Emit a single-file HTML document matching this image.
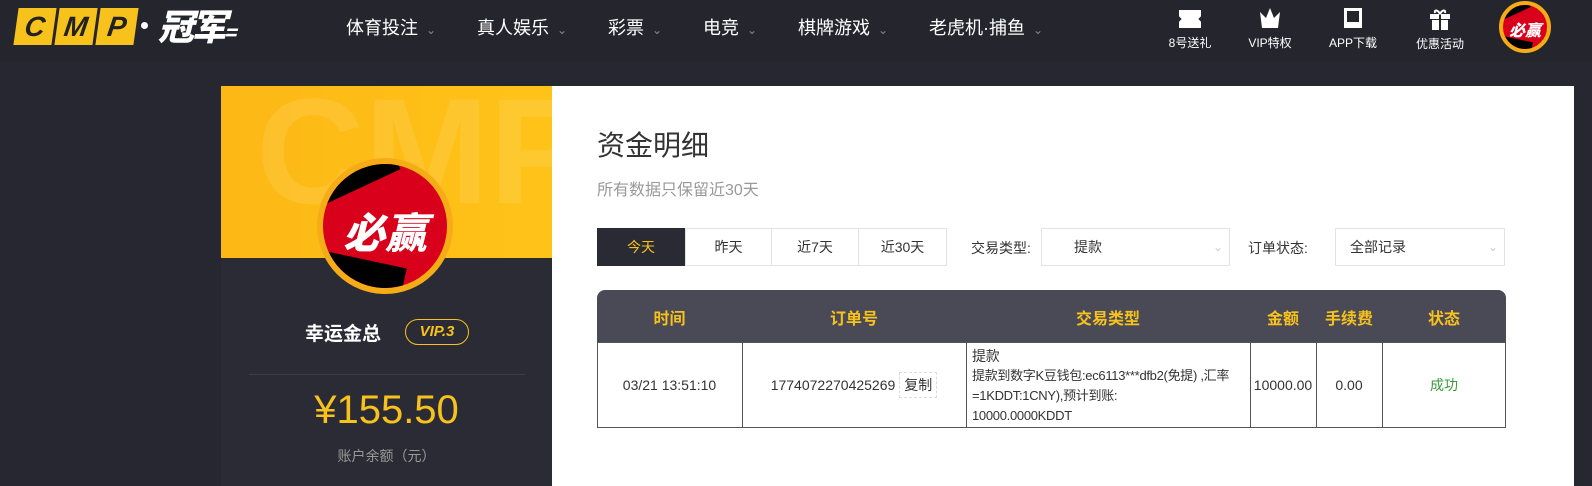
<!DOCTYPE html>
<html><head><meta charset="utf-8"><style>
*{margin:0;padding:0;box-sizing:border-box}
body{width:1592px;height:473px;overflow:hidden;background:#272731;font-family:"Liberation Sans","Noto Sans CJK SC",sans-serif;position:relative}
.hdr{position:absolute;left:0;top:0;width:1592px;height:62px;background:#25252e}
.logo{position:absolute;left:16px;top:8px;display:flex;gap:3px}
.logo b{display:block;width:38px;height:37px;background:#f8c21c;color:#222;font:italic 900 28px/37px "Liberation Sans",sans-serif;text-align:center;transform:skewX(-8deg)}
.gj{position:absolute;left:158px;top:4px;color:#fff;font:italic 900 36px/42px "Noto Sans CJK SC",sans-serif;letter-spacing:-3px}
.nav{position:absolute;top:14px;color:#fff;font-size:18px}
.nav span{color:#888;font-size:12px;margin-left:8px}
.ic{position:absolute;top:8px;width:80px;text-align:center;color:#fff;font-size:12px}
.ic i{display:block;margin:0 auto 6px;width:20px;height:20px;background:#fff}
.av{position:absolute;border-radius:50%;background:#d8001a;overflow:hidden;border:4px solid #f5ac17}
.av:before{content:"";position:absolute;left:-10%;top:-5%;width:70%;height:25%;background:#000;transform:rotate(-25deg)}
.av:after{content:"";position:absolute;left:-5%;bottom:-5%;width:70%;height:28%;background:#000;transform:rotate(12deg)}
.av span{position:absolute;left:0;right:0;text-align:center;color:#fff;font-weight:900;font-style:italic;z-index:2}
.side{position:absolute;left:221px;top:86px;width:331px;height:400px;background:#2b2b35}
.ytop{position:absolute;left:0;top:0;width:331px;height:172px;background:linear-gradient(90deg,#fdb815,#fec318);overflow:hidden}
.main{position:absolute;left:552px;top:86px;width:1022px;height:400px;background:#fff}
.t{position:absolute;font-size:14px;color:#333}
.cell{position:absolute;display:flex;align-items:center;justify-content:center;font-size:14px;color:#333}
</style></head><body>
<div class="hdr">
<div class="logo"><b>C</b><b>M</b><b>P</b></div>
<div style="position:absolute;left:141px;top:22px;width:7px;height:7px;border-radius:50%;background:#fff"></div>
<div class="gj">冠军<span style="font-size:20px">=</span></div>
<div class="nav" style="left:346px">体育投注<span>⌄</span></div>
<div class="nav" style="left:477px">真人娱乐<span>⌄</span></div>
<div class="nav" style="left:608px">彩票<span>⌄</span></div>
<div class="nav" style="left:703px">电竞<span>⌄</span></div>
<div class="nav" style="left:798px">棋牌游戏<span>⌄</span></div>
<div class="nav" style="left:929px">老虎机·捕鱼<span>⌄</span></div>
<div class="ic" style="left:1150px"><i style="width:22px;height:18px;margin-top:2px;clip-path:polygon(0 0,100% 0,100% 35%,88% 50%,100% 65%,100% 100%,0 100%,0 65%,12% 50%,0 35%)"></i>8号送礼</div>
<div class="ic" style="left:1230px"><i style="clip-path:polygon(0 20%,30% 50%,50% 0,70% 50%,100% 20%,90% 100%,10% 100%)"></i>VIP特权</div>
<div class="ic" style="left:1313px"><i style="width:18px;background:none;border:3px solid #fff;border-bottom-width:6px"></i>APP下载</div>
<div class="ic" style="left:1400px"><svg width="22" height="22" viewBox="0 0 22 22" style="display:block;margin:0 auto 5px"><path d="M1 6h20v5H1zM3 12h16v10H3z" fill="#fff"/><path d="M10 6v16h2V6z" fill="#25252e"/><path d="M11 6C9 2 5 1 6 5M11 6c2-4 6-5 5-1" stroke="#fff" stroke-width="2" fill="none"/></svg>优惠活动</div>
<div class="av" style="left:1499px;top:1px;width:52px;height:52px"><span style="top:12px;font-size:16px">必赢</span></div>
</div>
<div class="side">
<div class="ytop"><div style="position:absolute;left:35px;top:-10px;font:bold 150px/1 'Liberation Sans';color:rgba(255,255,255,.1)">CMP</div></div>
<div class="av" style="left:96px;top:72px;width:136px;height:136px;border-width:6px"><span style="top:36px;font-size:42px">必赢</span></div>
<div style="position:absolute;left:84px;top:233px;color:#fff;font-size:19px;font-weight:bold">幸运金总</div>
<div style="position:absolute;left:184px;top:233px;width:64px;height:26px;border:1px solid #f8c21c;border-radius:13px;color:#f8c21c;font:italic bold 15px/24px 'Liberation Sans';text-align:center">VIP.3</div>
<div style="position:absolute;left:28px;top:288px;width:276px;height:1px;background:#3d3d48"></div>
<div style="position:absolute;left:0;width:331px;top:302px;text-align:center;color:#f8c21c;font-size:40px">¥155.50</div>
<div style="position:absolute;left:0;width:331px;top:360px;text-align:center;color:#999;font-size:14px">账户余额（元）</div>
</div>
<div class="main">
<div class="t" style="left:45px;top:38px;font-size:28px">资金明细</div>
<div class="t" style="left:45px;top:90px;font-size:16px;color:#999">所有数据只保留近30天</div>
</div>
<div class="cell" style="left:597px;top:228px;width:88px;height:38px;background:#2a2a35;color:#f8c21c">今天</div>
<div class="cell" style="left:685px;top:228px;width:87px;height:38px;border:1px solid #e3e3e3">昨天</div>
<div class="cell" style="left:772px;top:228px;width:87px;height:38px;border:1px solid #e3e3e3;border-left:0">近7天</div>
<div class="cell" style="left:859px;top:228px;width:88px;height:38px;border:1px solid #e3e3e3;border-left:0">近30天</div>
<div class="t" style="left:971px;top:238px">交易类型:</div>
<div class="cell" style="left:1041px;top:228px;width:189px;height:38px;border:1px solid #e3e3e3;justify-content:flex-start;padding-left:32px">提款<span style="position:absolute;right:6px;color:#ccc;font-size:12px">⌄</span></div>
<div class="t" style="left:1248px;top:238px">订单状态:</div>
<div class="cell" style="left:1335px;top:228px;width:170px;height:38px;border:1px solid #e3e3e3;justify-content:flex-start;padding-left:14px">全部记录<span style="position:absolute;right:6px;color:#ccc;font-size:12px">⌄</span></div>
<div style="position:absolute;left:597px;top:290px;width:909px;height:53px;background:#4a4a56;border-radius:8px 8px 0 0"></div>
<div style="position:absolute;left:597px;top:342px;width:909px;height:86px;border:1px solid #555"></div>
<div class="cell" style="left:597px;top:290px;width:145px;height:53px;color:#f8c21c;font-weight:bold;font-size:16px">时间</div>
<div class="cell" style="left:742px;top:290px;width:224px;height:53px;color:#f8c21c;font-weight:bold;font-size:16px">订单号</div>
<div class="cell" style="left:966px;top:290px;width:284px;height:53px;color:#f8c21c;font-weight:bold;font-size:16px">交易类型</div>
<div class="cell" style="left:1250px;top:290px;width:66px;height:53px;color:#f8c21c;font-weight:bold;font-size:16px">金额</div>
<div class="cell" style="left:1316px;top:290px;width:66px;height:53px;color:#f8c21c;font-weight:bold;font-size:16px">手续费</div>
<div class="cell" style="left:1382px;top:290px;width:124px;height:53px;color:#f8c21c;font-weight:bold;font-size:16px">状态</div>
<div style="position:absolute;top:342px;height:86px;left:742px;width:1px;background:#555"></div>
<div style="position:absolute;top:342px;height:86px;left:966px;width:1px;background:#555"></div>
<div style="position:absolute;top:342px;height:86px;left:1250px;width:1px;background:#555"></div>
<div style="position:absolute;top:342px;height:86px;left:1316px;width:1px;background:#555"></div>
<div style="position:absolute;top:342px;height:86px;left:1382px;width:1px;background:#555"></div>
<div class="cell" style="left:597px;top:342px;width:145px;height:86px">03/21 13:51:10</div>
<div class="cell" style="left:742px;top:342px;width:224px;height:86px">1774072270425269<span style="margin-left:4px;border:1px dashed #ddd;padding:2px 4px">复制</span></div>
<div style="position:absolute;left:972px;top:346px;width:276px;font-size:13px;line-height:20px;color:#333;letter-spacing:-0.3px"><div style="font-size:14px">提款</div>提款到数字K豆钱包:ec6113***dfb2(免提) ,汇率=1KDDT:1CNY),预计到账:<br>10000.0000KDDT</div>
<div class="cell" style="left:1250px;top:342px;width:66px;height:86px">10000.00</div>
<div class="cell" style="left:1316px;top:342px;width:66px;height:86px">0.00</div>
<div class="cell" style="left:1382px;top:342px;width:124px;height:86px;color:#3a9a3a">成功</div>
</body></html>
